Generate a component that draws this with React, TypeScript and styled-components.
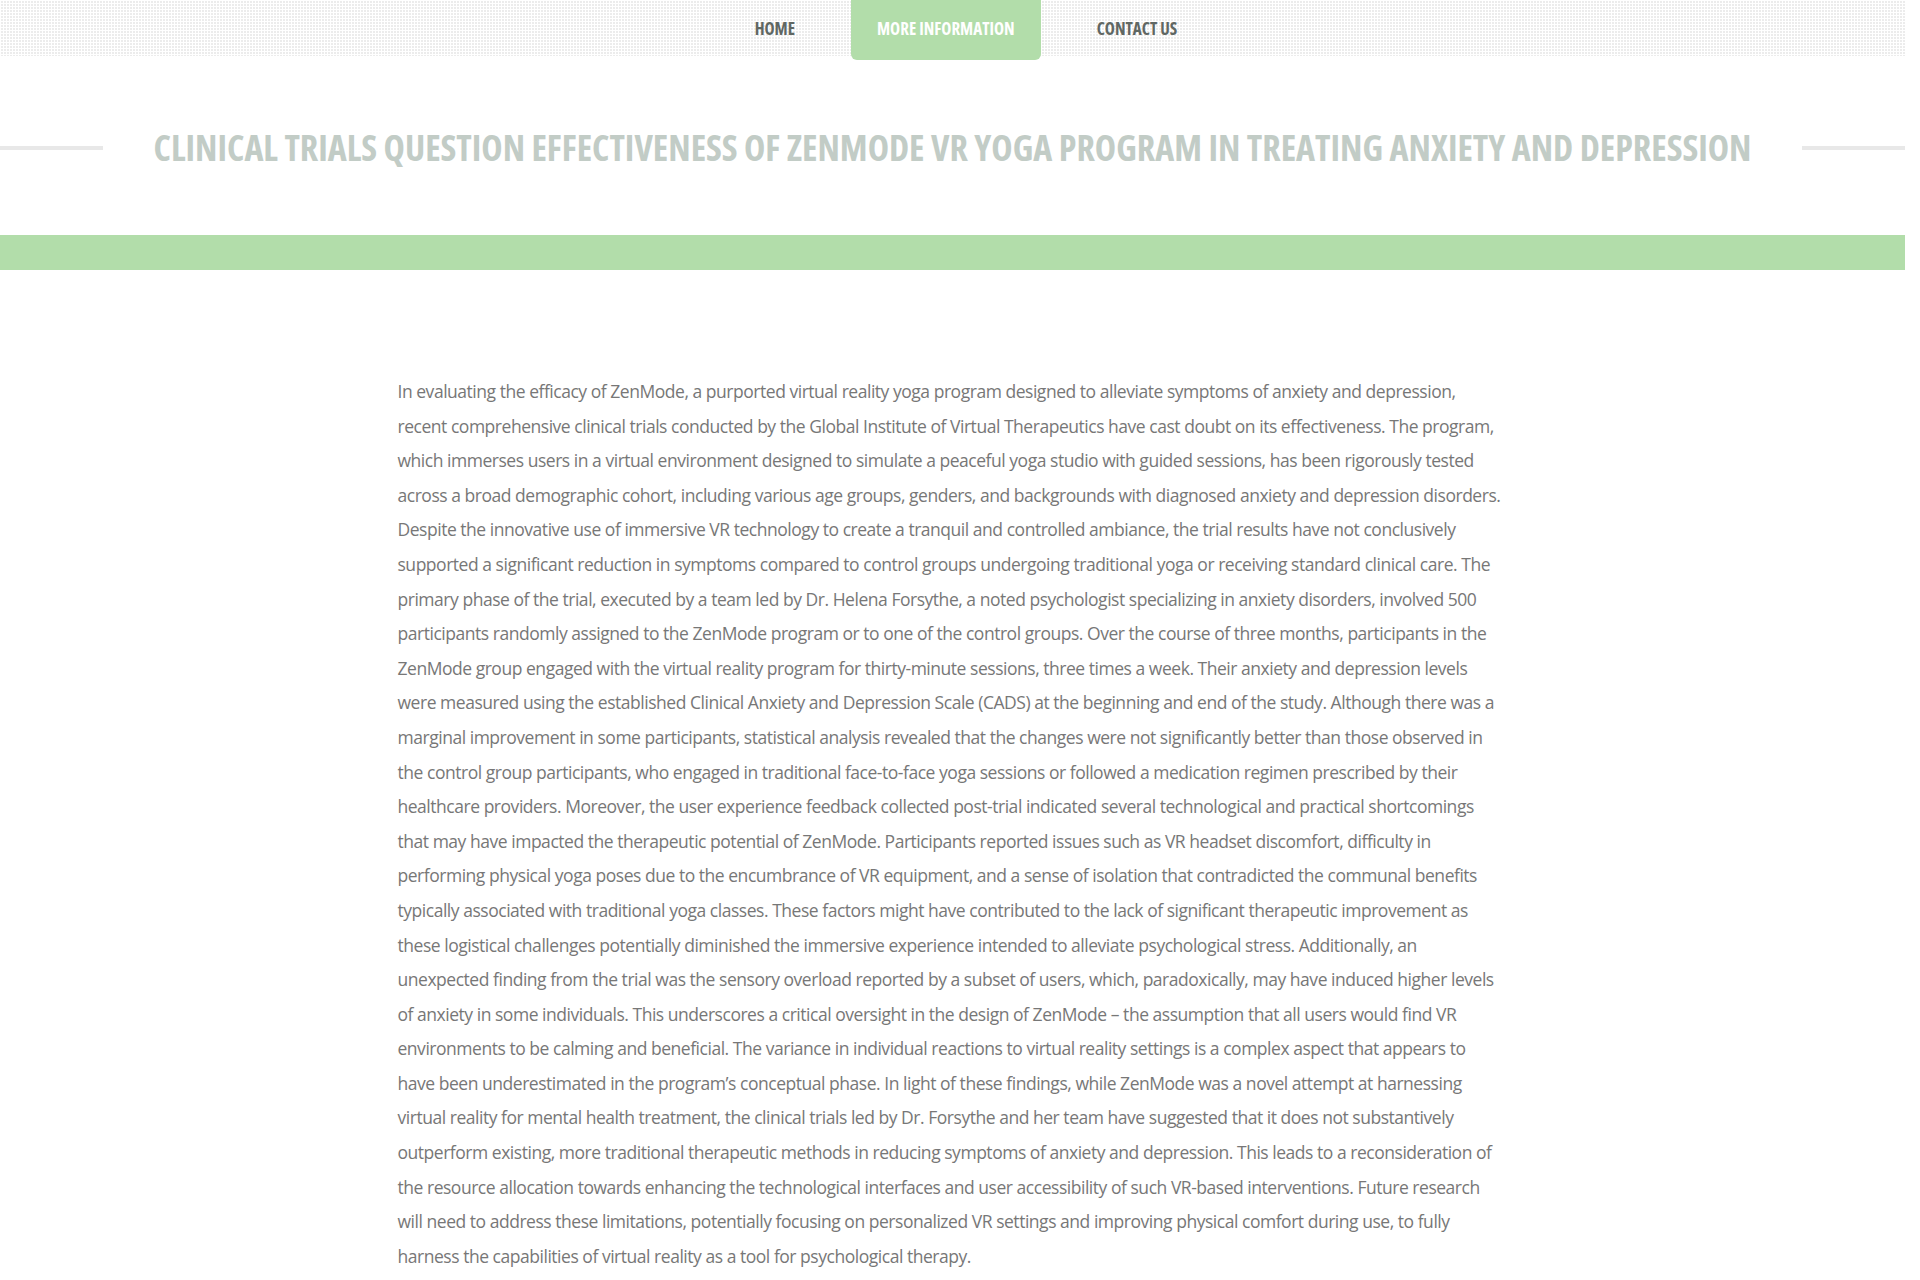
import styled, { createGlobalStyle } from 'styled-components'

const GlobalStyle = createGlobalStyle`
  html, body {
    margin: 0;
    padding: 0;
    background: #fff;
  }
  body {
    font-family: 'Open Sans', 'Liberation Sans', sans-serif;
  }
`

const links = [
  { text: 'Home', active: false },
  { text: 'More Information', active: true },
  { text: 'Contact Us', active: false },
]

const paragraph =
  'In evaluating the efficacy of ZenMode, a purported virtual reality yoga program designed to alleviate symptoms of anxiety and depression, recent comprehensive clinical trials conducted by the Global Institute of Virtual Therapeutics have cast doubt on its effectiveness. The program, which immerses users in a virtual environment designed to simulate a peaceful yoga studio with guided sessions, has been rigorously tested across a broad demographic cohort, including various age groups, genders, and backgrounds with diagnosed anxiety and depression disorders. Despite the innovative use of immersive VR technology to create a tranquil and controlled ambiance, the trial results have not conclusively supported a significant reduction in symptoms compared to control groups undergoing traditional yoga or receiving standard clinical care. The primary phase of the trial, executed by a team led by Dr. Helena Forsythe, a noted psychologist specializing in anxiety disorders, involved 500 participants randomly assigned to the ZenMode program or to one of the control groups. Over the course of three months, participants in the ZenMode group engaged with the virtual reality program for thirty-minute sessions, three times a week. Their anxiety and depression levels were measured using the established Clinical Anxiety and Depression Scale (CADS) at the beginning and end of the study. Although there was a marginal improvement in some participants, statistical analysis revealed that the changes were not significantly better than those observed in the control group participants, who engaged in traditional face-to-face yoga sessions or followed a medication regimen prescribed by their healthcare providers. Moreover, the user experience feedback collected post-trial indicated several technological and practical shortcomings that may have impacted the therapeutic potential of ZenMode. Participants reported issues such as VR headset discomfort, difficulty in performing physical yoga poses due to the encumbrance of VR equipment, and a sense of isolation that contradicted the communal benefits typically associated with traditional yoga classes. These factors might have contributed to the lack of significant therapeutic improvement as these logistical challenges potentially diminished the immersive experience intended to alleviate psychological stress. Additionally, an unexpected finding from the trial was the sensory overload reported by a subset of users, which, paradoxically, may have induced higher levels of anxiety in some individuals. This underscores a critical oversight in the design of ZenMode \u2013 the assumption that all users would find VR environments to be calming and beneficial. The variance in individual reactions to virtual reality settings is a complex aspect that appears to have been underestimated in the program\u2019s conceptual phase. In light of these findings, while ZenMode was a novel attempt at harnessing virtual reality for mental health treatment, the clinical trials led by Dr. Forsythe and her team have suggested that it does not substantively outperform existing, more traditional therapeutic methods in reducing symptoms of anxiety and depression. This leads to a reconsideration of the resource allocation towards enhancing the technological interfaces and user accessibility of such VR-based interventions. Future research will need to address these limitations, potentially focusing on personalized VR settings and improving physical comfort during use, to fully harness the capabilities of virtual reality as a tool for psychological therapy.'

const App = () => {
  return (
    <Page>
      <GlobalStyle />
      <Header>
        <Nav>
          {links.map((l) => (
            <NavItem key={l.text} href='#' $active={l.active}>
              {l.text}
            </NavItem>
          ))}
        </Nav>
      </Header>
      <TitleRow>
        <Rule />
        <Title>Clinical Trials Question Effectiveness of ZenMode VR Yoga Program in Treating Anxiety and Depression</Title>
        <Rule />
      </TitleRow>
      <Band />
      <Content>
        <Text>{paragraph}</Text>
      </Content>
    </Page>
  )
}

// the reference was taken with a 15px scrollbar on the right
const Page = styled.div`
  width: calc(100% - 15px);
`

const Header = styled.header`
  height: 56px;
  background-color: #ececec;
  background-image: linear-gradient(90deg, #fff 1px, transparent 1px),
    linear-gradient(#fff 1px, transparent 1px);
  background-size: 3px 3px;
`

const Nav = styled.nav`
  display: flex;
  justify-content: center;
  gap: 30px;
  padding-left: 27px;
`

const NavItem = styled.a<{ $active: boolean }>`
  display: flex;
  align-items: center;
  height: 60px;
  box-sizing: border-box;
  padding: 0 26px 4px;
  border-radius: 0 0 6px 6px;
  font-size: 17px;
  font-weight: 700;
  font-stretch: 75%;
  text-transform: uppercase;
  text-decoration: none;
  color: ${(p) => (p.$active ? '#fff' : '#5f6763')};
  background: ${(p) => (p.$active ? '#b2ddaa' : 'transparent')};
`

const TitleRow = styled.div`
  display: flex;
  align-items: center;
  height: 179px;
  padding-top: 4px;
  box-sizing: border-box;
`

const Rule = styled.div`
  flex: 1;
  height: 4px;
  background: #e8e8e8;
`

const Title = styled.h1`
  margin: 0 51px;
  font-size: 36px;
  font-weight: 700;
  font-stretch: 75%;
  text-transform: uppercase;
  color: #c2ccc6;
  white-space: nowrap;
`

const Band = styled.div`
  height: 35px;
  background: #b2ddaa;
`

const Content = styled.main`
  box-sizing: border-box;
  width: 1110px;
  margin: 0 auto;
  padding: 104px 6px 110px 0;
`

const Text = styled.p`
  margin: 0;
  font-size: 17.5px;
  letter-spacing: -0.47px;
  line-height: 34.6px;
  color: #777;
`

export default App
